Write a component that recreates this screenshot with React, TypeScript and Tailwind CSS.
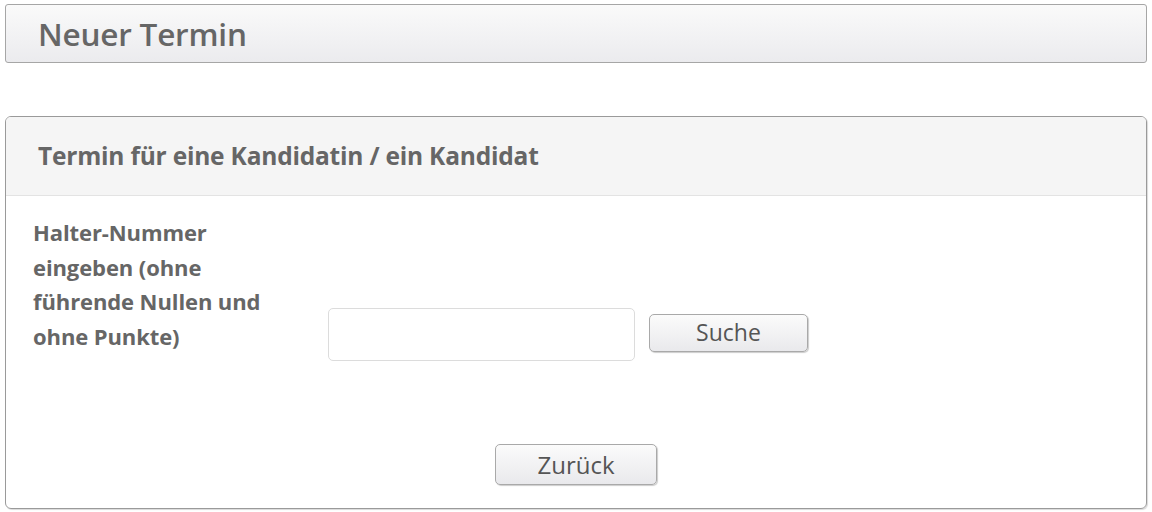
export default function App() {
  const font = { fontFamily: '"Open Sans", "Noto Sans", sans-serif' };

  return (
    <div className="w-[1152px] h-[512px] bg-white text-[#666]" style={font}>
      {/* Page title bar */}
      <div className="pt-[4px] px-[5px]">
        <div className="h-[59px] flex items-center px-[32px] border border-[#a6a6a6] rounded-[3px] bg-gradient-to-b from-[#fafafa] to-[#ebebee]">
          <h1 className="text-[31.5px] font-semibold text-[#666] leading-none tracking-[-0.2px]">Neuer Termin</h1>
        </div>
      </div>

      {/* Panel */}
      <div className="mt-[53px] mx-[5px] h-[393px] border border-[#9a9a9a] rounded-[6px] shadow-[1px_1px_1px_rgba(0,0,0,0.15)] overflow-hidden flex flex-col">
        <div className="h-[79px] shrink-0 flex items-center px-[32px] bg-[#f5f5f5] border-b border-[#e3e3e3]">
          <h2 className="text-[24.5px] font-bold text-[#666] tracking-[-0.2px]">
            Termin für eine Kandidatin / ein Kandidat
          </h2>
        </div>

        <div className="flex-1 flex flex-col">
          <div className="flex items-end pt-[19px] pl-[27px]">
            <div className="w-[240px] text-[22px] font-bold leading-[34.5px] text-[#666] tracking-[-0.1px]">
              Halter-Nummer eingeben (ohne führende Nullen und ohne Punkte)
            </div>
            <div className="ml-[55px] flex items-center gap-[14px] mb-[-8px]">
              <input
                type="text"
                className="w-[307px] h-[53px] border border-[#dcdcdc] rounded-[5px] bg-white outline-none"
              />
              <button className="w-[159px] h-[38px] mt-[-4px] border border-[#a9a9a9] rounded-[5px] bg-gradient-to-b from-[#fbfbfb] to-[#e9e9ec] shadow-[1px_1px_1px_rgba(0,0,0,0.2)] text-[23px] text-[#555] leading-none">
                Suche
              </button>
            </div>
          </div>

          <div className="flex justify-center mt-[91px]">
            <button className="w-[162px] h-[41px] border border-[#a9a9a9] rounded-[5px] bg-gradient-to-b from-[#fbfbfb] to-[#e9e9ec] shadow-[1px_1px_1px_rgba(0,0,0,0.2)] text-[24px] text-[#555] leading-none">
              Zurück
            </button>
          </div>
        </div>
      </div>
    </div>
  );
}
